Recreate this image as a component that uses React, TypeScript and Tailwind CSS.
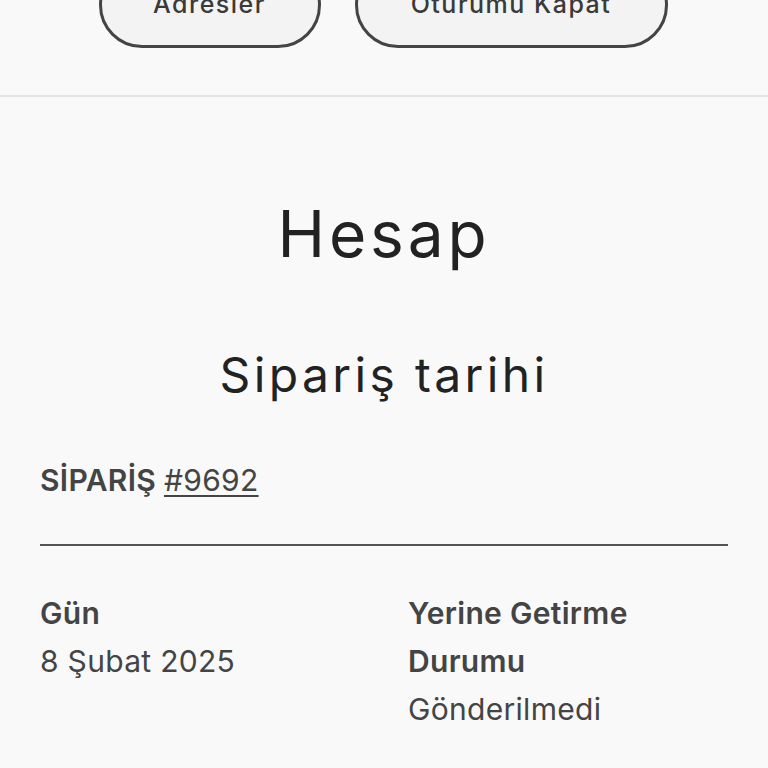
export default function App() {
  return (
    <div className="min-h-[768px] overflow-hidden bg-[#f9f9f9] text-[#444]" style={{ fontFamily: 'Inter, "Noto Sans", sans-serif' }}>
      {/* account actions, scrolled partly out of view */}
      <div className="border-b-2 border-[#e4e4e4] pb-[47px]">
        <div className="-mt-[38px] flex justify-center gap-[34px] pr-[2px]">
          <button className="flex h-[86px] w-[222px] items-center justify-center rounded-full border-[3px] border-[#444] bg-[#f3f3f3] text-[25px] font-medium tracking-[0.06em] text-[#3a3a3a]">
            Adresler
          </button>
          <button className="flex h-[86px] w-[313px] items-center justify-center rounded-full border-[3px] border-[#444] bg-[#f3f3f3] text-[25px] font-medium tracking-[0.06em] text-[#3a3a3a]">
            Oturumu Kapat
          </button>
        </div>
      </div>

      <div className="px-10">
        <h1 className="mt-[97px] text-center text-[64px] leading-[80px] font-normal tracking-[0.06em] text-[#222]">Hesap</h1>
        <h2 className="mt-[73px] text-center text-[48px] leading-[56px] font-normal tracking-[0.07em] text-[#222]">Sipariş tarihi</h2>

        <p className="mt-[59px] text-[30px] leading-[36px] font-semibold tracking-[0.01em]">
          SİPARİŞ{' '}
          <a href="#" className="font-normal underline decoration-2 underline-offset-4">
            #9692
          </a>
        </p>

        <div className="mt-[46px] h-[2px] bg-[#555]" />

        <div className="mt-[43px] grid grid-cols-2 gap-x-[48px] text-[30px] leading-[48px] tracking-[0.01em]">
          <div>
            <p className="font-semibold">Gün</p>
            <p>8 Şubat 2025</p>
          </div>
          <div>
            <p className="font-semibold">Yerine Getirme Durumu</p>
            <p>Gönderilmedi</p>
          </div>
        </div>
      </div>
    </div>
  );
}
